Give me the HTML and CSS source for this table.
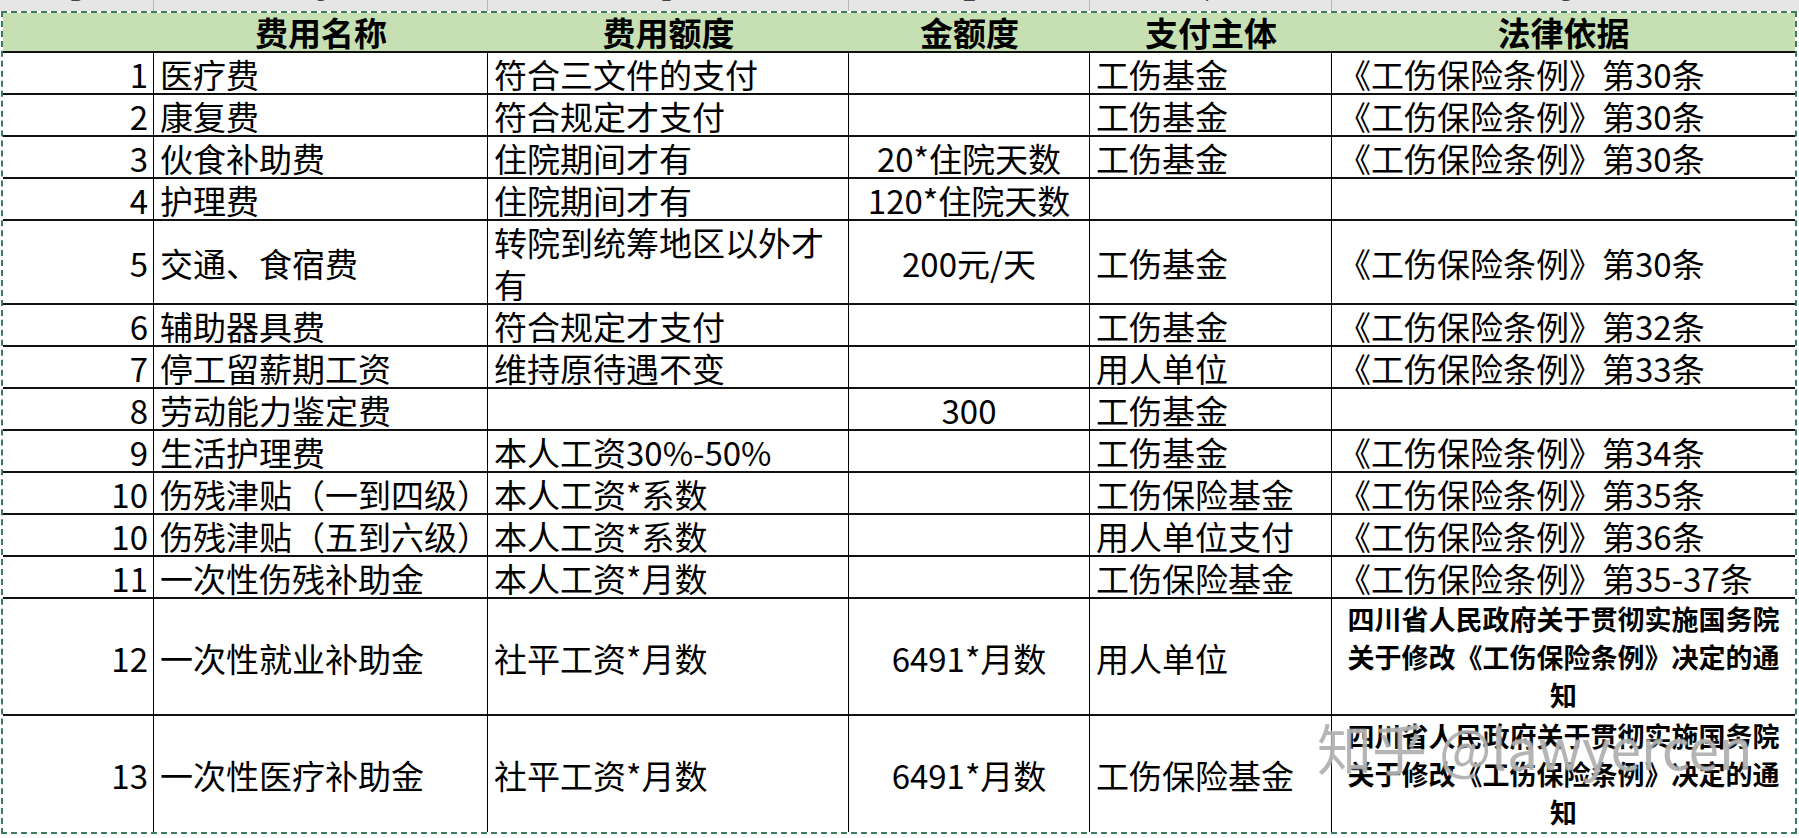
FILE: index.html
```html
<!DOCTYPE html>
<html lang="zh-CN">
<head>
<meta charset="utf-8">
<title>工伤费用表</title>
<link rel="stylesheet" href="styles.css">
</head>
<body>
<div class="colbar">
  <div class="ch"><span>B</span></div>
  <div class="ch"><span>C</span></div>
  <div class="ch"><span>D</span></div>
  <div class="ch"><span>E</span></div>
  <div class="ch"><span>F</span></div>
  <div class="ch"><span>G</span></div>
</div>
<div class="sheet">
  <div class="grid">
    <div class="hd"></div>
    <div class="hd">费用名称</div>
    <div class="hd">费用额度</div>
    <div class="hd">金额度</div>
    <div class="hd">支付主体</div>
    <div class="hd">法律依据</div>

    <div class="c num">1</div><div class="c">医疗费</div><div class="c">符合三文件的支付</div><div class="c mid"></div><div class="c">工伤基金</div><div class="c last">《工伤保险条例》第30条</div>
    <div class="c num">2</div><div class="c">康复费</div><div class="c">符合规定才支付</div><div class="c mid"></div><div class="c">工伤基金</div><div class="c last">《工伤保险条例》第30条</div>
    <div class="c num">3</div><div class="c">伙食补助费</div><div class="c">住院期间才有</div><div class="c mid">20*住院天数</div><div class="c">工伤基金</div><div class="c last">《工伤保险条例》第30条</div>
    <div class="c num">4</div><div class="c">护理费</div><div class="c">住院期间才有</div><div class="c mid">120*住院天数</div><div class="c"></div><div class="c last"></div>
    <div class="c num">5</div><div class="c">交通、食宿费</div><div class="c">转院到统筹地区以外才<br>有</div><div class="c mid">200元/天</div><div class="c">工伤基金</div><div class="c last">《工伤保险条例》第30条</div>
    <div class="c num">6</div><div class="c">辅助器具费</div><div class="c">符合规定才支付</div><div class="c mid"></div><div class="c">工伤基金</div><div class="c last">《工伤保险条例》第32条</div>
    <div class="c num">7</div><div class="c">停工留薪期工资</div><div class="c">维持原待遇不变</div><div class="c mid"></div><div class="c">用人单位</div><div class="c last">《工伤保险条例》第33条</div>
    <div class="c num">8</div><div class="c">劳动能力鉴定费</div><div class="c"></div><div class="c mid">300</div><div class="c">工伤基金</div><div class="c last"></div>
    <div class="c num">9</div><div class="c">生活护理费</div><div class="c">本人工资30%-50%</div><div class="c mid"></div><div class="c">工伤基金</div><div class="c last">《工伤保险条例》第34条</div>
    <div class="c num">10</div><div class="c">伤残津贴（一到四级）</div><div class="c">本人工资*系数</div><div class="c mid"></div><div class="c">工伤保险基金</div><div class="c last">《工伤保险条例》第35条</div>
    <div class="c num">10</div><div class="c">伤残津贴（五到六级）</div><div class="c">本人工资*系数</div><div class="c mid"></div><div class="c">用人单位支付</div><div class="c last">《工伤保险条例》第36条</div>
    <div class="c num">11</div><div class="c">一次性伤残补助金</div><div class="c">本人工资*月数</div><div class="c mid"></div><div class="c">工伤保险基金</div><div class="c last">《工伤保险条例》第35-37条</div>
    <div class="c num">12</div><div class="c">一次性就业补助金</div><div class="c">社平工资*月数</div><div class="c mid">6491*月数</div><div class="c">用人单位</div><div class="c last law">四川省人民政府关于贯彻实施国务院<br>关于修改《工伤保险条例》决定的通<br>知</div>
    <div class="c num end">13</div><div class="c end">一次性医疗补助金</div><div class="c end">社平工资*月数</div><div class="c mid end">6491*月数</div><div class="c end">工伤保险基金</div><div class="c last law end">四川省人民政府关于贯彻实施国务院<br>关于修改《工伤保险条例》决定的通<br>知</div>
  </div>
  <div class="watermark">知乎 @lawyercen</div>
</div>
</body>
</html>
```

FILE: styles.css
```css
html, body {
  margin: 0;
  padding: 0;
  background: #ffffff;
}

body {
  width: 1799px;
  height: 838px;
  overflow: hidden;
  font-family: "Noto Sans CJK SC", "Noto Sans", sans-serif;
  color: #000;
}

.colbar {
  display: grid;
  grid-template-columns: 154px 334px 361px 241px 242px 1fr;
  height: 11px;
  background: #e6e6e6;
  overflow: hidden;
}

.ch {
  border-right: 1px solid #b8b8b8;
  text-align: center;
  overflow: hidden;
  height: 11px;
}

.ch:last-child {
  border-right: none;
}

.ch span {
  display: block;
  font-family: "Liberation Sans", sans-serif;
  font-size: 20px;
  line-height: 20px;
  margin-top: -16px;
  color: #444;
}

.sheet {
  position: relative;
  margin-left: 1px;
  width: 1792px;
  border: 2px dashed #3b7c5c;
}

.grid {
  display: grid;
  grid-template-columns: 151px 334px 361px 241px 242px 1fr;
  grid-template-rows: 40px repeat(4, 42px) 84px repeat(7, 42px) 117px 116px;
}

.hd {
  background: #c6e0b4;
  font-weight: 700;
  font-size: 33px;
  line-height: 38px;
  text-align: center;
  border-bottom: 2px solid #111;
  display: flex;
  align-items: center;
  justify-content: center;
}

.c {
  font-size: 33px;
  line-height: 42px;
  border-right: 1px solid #000;
  border-bottom: 2px solid #111;
  padding: 2px 4px 0 6px;
  display: flex;
  align-items: center;
  white-space: nowrap;
  overflow: hidden;
}

.c.num {
  justify-content: flex-end;
  padding-right: 5px;
}

.c.mid {
  justify-content: center;
  text-align: center;
  padding-left: 4px;
}

.c.last {
  border-right: none;
}

.c.law {
  font-weight: 700;
  font-size: 27px;
  line-height: 38px;
  justify-content: center;
  text-align: center;
  padding: 0 4px;
}

.c.end {
  border-bottom: none;
}

.watermark {
  position: absolute;
  left: 1314px;
  top: 706px;
  font-family: "Noto Sans CJK SC", sans-serif;
  font-size: 55px;
  line-height: 55px;
  color: rgba(150, 150, 150, 0.7);
  text-shadow: 0 0 2px rgba(255, 255, 255, 0.9);
  white-space: nowrap;
  pointer-events: none;
}
```
